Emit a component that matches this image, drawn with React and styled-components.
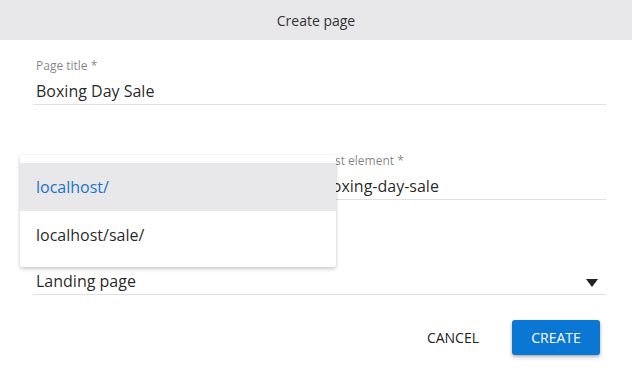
import React from "react";
import styled, { createGlobalStyle } from "styled-components";

const Global = createGlobalStyle`
  html, body {
    margin: 0;
    padding: 0;
    background: #fff;
    font-family: "Open Sans", "Noto Sans", sans-serif;
  }
`;

const Dialog = styled.div`
  position: relative;
  width: 632px;
  height: 382px;
  background: #fff;
  overflow: hidden;
`;

const Header = styled.div`
  height: 40px;
  display: flex;
  align-items: center;
  justify-content: center;
  background: #e8e8ea;
  color: #333;
  font-size: 14px;
`;

const Body = styled.div`
  padding: 18px 26px 0 33px;
  display: flex;
  flex-direction: column;
  gap: 48px;
`;

const Row = styled.div`
  display: grid;
  grid-template-columns: 270px 1fr;
  column-gap: 16px;
`;

const Field = styled.div`
  display: flex;
  flex-direction: column;
`;

const Label = styled.label`
  padding-left: 3px;
  font-size: 12px;
  line-height: 16px;
  color: rgba(0, 0, 0, 0.5);
  white-space: nowrap;
`;

const Value = styled.div`
  display: flex;
  align-items: center;
  justify-content: space-between;
  margin-top: 5px;
  padding: 0 0 1px 3px;
  font-size: 16px;
  line-height: 24px;
  color: rgba(0, 0, 0, 0.87);
  border-bottom: 1px solid #e0e0e0;
  white-space: nowrap;
`;

const Caret = styled.span`
  width: 0;
  height: 0;
  margin: 4px 8px 0 0;
  border-left: 6px solid transparent;
  border-right: 6px solid transparent;
  border-top: 8px solid #222;
`;

const Actions = styled.div`
  display: flex;
  justify-content: flex-end;
  align-items: center;
  gap: 17px;
  padding: 25px 32px 0 0;
`;

const Button = styled.button`
  height: 35px;
  padding: 0 16px;
  border: none;
  border-radius: 3px;
  font-family: inherit;
  font-size: 14px;
  text-transform: uppercase;
  cursor: pointer;
  background: ${(p) => (p.$primary ? "#0a77d4" : "transparent")};
  color: ${(p) => (p.$primary ? "#fff" : "#222")};
  box-shadow: ${(p) =>
    p.$primary ? "0 2px 4px rgba(0,0,0,0.25), 0 1px 2px rgba(0,0,0,0.15)" : "none"};
  min-width: ${(p) => (p.$primary ? "88px" : "auto")};
`;

const Menu = styled.ul`
  position: absolute;
  left: 20px;
  top: 155px;
  width: 316px;
  margin: 0;
  padding: 8px 0;
  list-style: none;
  background: #fff;
  border-radius: 2px;
  box-shadow: 0 2px 4px rgba(0, 0, 0, 0.2), 0 0 2px rgba(0, 0, 0, 0.08);
`;

const Item = styled.li`
  height: 48px;
  display: flex;
  align-items: center;
  padding-left: 16px;
  font-size: 16px;
  background: ${(p) => (p.$active ? "#e8e8ea" : "transparent")};
  color: ${(p) => (p.$active ? "#1a73c8" : "rgba(0,0,0,0.87)")};
`;

export default function App() {
  return (
    <>
      <Global />
      <Dialog>
        <Header>Create page</Header>
        <Body>
          <Field>
            <Label>Page title *</Label>
            <Value>Boxing Day Sale</Value>
          </Field>
          <Row>
            <Field>
              <Label>Parent URL *</Label>
              <Value>localhost/</Value>
            </Field>
            <Field>
              <Label>Last element *</Label>
              <Value>boxing-day-sale</Value>
            </Field>
          </Row>
          <Field>
            <Label>Page type</Label>
            <Value>
              Landing page
              <Caret />
            </Value>
          </Field>
        </Body>
        <Actions>
          <Button>Cancel</Button>
          <Button $primary>Create</Button>
        </Actions>
        <Menu>
          <Item $active>localhost/</Item>
          <Item>localhost/sale/</Item>
        </Menu>
      </Dialog>
    </>
  );
}
